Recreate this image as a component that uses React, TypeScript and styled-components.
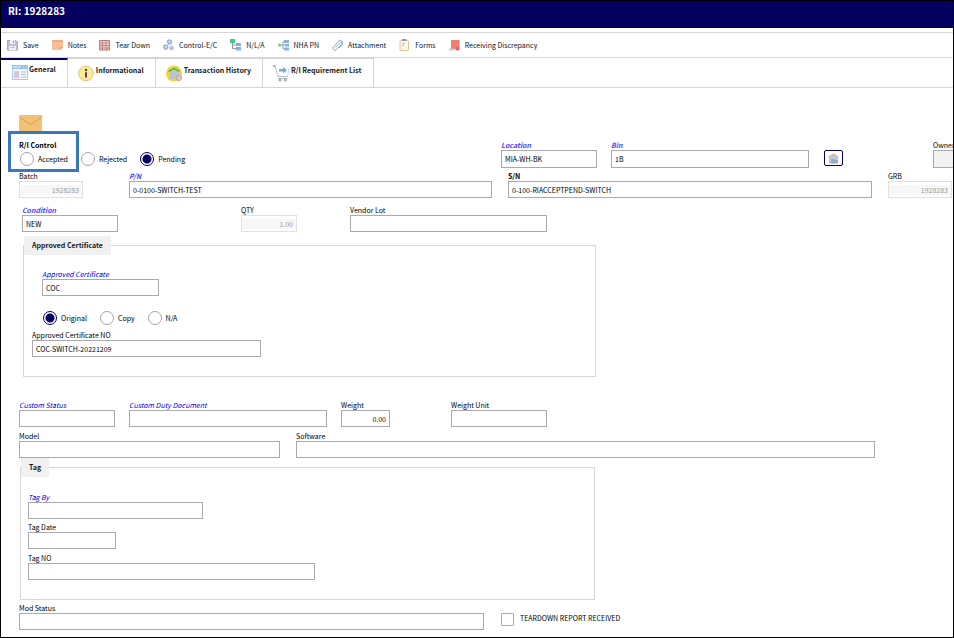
import React, { useState } from "react";
import type { ReactNode } from "react";
import styled, { createGlobalStyle, css } from "styled-components";

const NAVY = "#05005f";
const LINE = "#d6d6d6";
const FIELD_LINE = "#a9a9ae";

const GlobalStyle = createGlobalStyle`
  *, *::before, *::after { box-sizing: border-box; }
  body { margin: 0; background: #fff; }
  body, button, input, fieldset {
    font-family: "Noto Sans CJK SC", "Noto Sans", sans-serif;
    font-size: 7px;
    line-height: 10px;
    color: #000;
  }
`;

const Page = styled.div`
  border: 1px solid #000;
  overflow: hidden;
`;

const TitleBar = styled.header`
  height: 27px;
  padding: 2px 7px;
  background: ${NAVY};
`;

const Title = styled.h1`
  margin: 0;
  font-size: 10px;
  line-height: 16px;
  font-weight: 700;
  color: #fff;
`;

const Toolbar = styled.div`
  display: flex;
  align-items: center;
  gap: 13px;
  height: 26px;
  margin-top: 4px;
  padding: 0 6px;
  border-top: 1px solid ${LINE};
  border-bottom: 1px solid ${LINE};
`;

const ToolButton = styled.button`
  display: flex;
  align-items: center;
  gap: 5px;
  padding: 0;
  border: 0;
  background: none;
  white-space: nowrap;
  color: #0c1428;

  svg { width: 11px; height: 12px; flex: none; }
`;

const Tabs = styled.div`
  display: flex;
  height: 30px;
  border-bottom: 1px solid ${LINE};
`;

const Tab = styled.button<{ $active?: boolean }>`
  display: flex;
  align-items: flex-start;
  gap: 1px;
  padding: 6px 11px 0 10px;
  border: 0;
  border-top: 1px solid ${LINE};
  border-right: 1px solid ${LINE};
  background: #fff;
  font-weight: 700;
  line-height: 10px;
  white-space: nowrap;
  color: #1a1a1a;

  svg { width: 17px; height: 17px; flex: none; }

  ${(p) => p.$active && css`
    border-top: 2px solid ${NAVY};
    padding-top: 4px;
  `}
`;

const Form = styled.form`
  padding: 27px 1px 7px 18px;
`;

const MailButton = styled.button`
  display: block;
  width: 23px;
  height: 17px;
  margin-bottom: 8px;
  padding: 0;
  border: 0;
  background: none;

  svg { display: block; }
`;

const Row = styled.div<{ $top?: number; $left?: number }>`
  display: flex;
  align-items: flex-end;
  margin-top: ${(p) => p.$top ?? 0}px;
  padding-left: ${(p) => p.$left ?? 0}px;
`;

const FieldBox = styled.div<{ $width: number; $gap?: number; $grow?: boolean }>`
  display: flex;
  flex-direction: column;
  flex: ${(p) => (p.$grow ? "1 1" : "0 0")} ${(p) => p.$width}px;
  width: ${(p) => p.$width}px;
  margin-left: ${(p) => p.$gap ?? 0}px;
`;

type Tone = "plain" | "bold" | "link" | "required";

const FieldLabel = styled.label<{ $tone: Tone }>`
  height: 10px;
  white-space: nowrap;
  ${(p) => p.$tone === "bold" && css`font-weight: 700;`}
  ${(p) => p.$tone === "link" && css`font-style: italic; color: #0000f0;`}
  ${(p) => p.$tone === "required" && css`font-style: italic; font-weight: 700; color: #4a44ff;`}
`;

const TextInput = styled.input<{ $tall?: boolean; $right?: boolean }>`
  width: 100%;
  height: ${(p) => (p.$tall ? 18 : 17)}px;
  padding: 0 3px;
  border: 1px solid ${FIELD_LINE};
  border-radius: 0;
  background: #fff;
  text-align: ${(p) => (p.$right ? "right" : "left")};

  &:disabled {
    border-color: #e0e0e0;
    background: linear-gradient(#f7f7f7, #f7f7f7) 0 3px / 100% 10px no-repeat #fff;
    color: #9a9a9a;
  }

  &:read-only:enabled { background: #f3f3f3; }
`;

const ControlGroup = styled.div`
  position: relative;
  flex: 0 0 482px;
`;

const GroupTitle = styled.div`
  font-weight: 700;
`;

const Highlight = styled.div`
  position: absolute;
  top: -9px;
  left: -11px;
  width: 71px;
  height: 41px;
  border: 3px solid #3b78b8;
  pointer-events: none;
`;

const Radios = styled.div`
  display: flex;
  align-items: center;
  gap: 13px;
  height: 18px;
`;

const RadioLabel = styled.label`
  display: flex;
  align-items: center;
  gap: 4px;
  white-space: nowrap;
`;

const RadioInput = styled.input`
  appearance: none;
  width: 14px;
  height: 14px;
  margin: 0;
  border: 1px solid #a4a4a8;
  border-radius: 50%;
  background: #fff;

  &:checked {
    border-color: ${NAVY};
    background: radial-gradient(circle, ${NAVY} 0 4px, #fff 5px);
  }
`;

const BinButton = styled.button`
  display: flex;
  align-items: center;
  justify-content: center;
  width: 19px;
  height: 16px;
  margin: 0 90px 2px 15px;
  flex: none;
  padding: 0;
  border: 1px solid ${NAVY};
  border-radius: 2px;
  background: #fff;
`;

const Group = styled.fieldset<{ $top: number; $left: number; $width: number; $bottom: number }>`
  min-width: 0;
  max-width: ${(p) => p.$width}px;
  margin: ${(p) => p.$top}px 0 0 ${(p) => p.$left}px;
  padding: 0 0 ${(p) => p.$bottom}px;
  border: 1px solid ${LINE};
`;

const Legend = styled.legend`
  padding: 0 8px;
  background: #f0f0f0;
  font-weight: 700;
  line-height: 19px;
  color: #1a1a1a;
`;

const CheckLabel = styled.label`
  display: flex;
  align-items: flex-start;
  gap: 6px;
  height: 13px;
  margin: 0 0 4px 17px;
  white-space: nowrap;
`;

const CheckInput = styled.input`
  appearance: none;
  width: 13px;
  height: 13px;
  margin: 0;
  border: 1px solid ${FIELD_LINE};
  border-radius: 1px;
  background: #fff;

  &:checked { background: ${NAVY}; }
`;

interface FieldProps {
  id: string;
  label: string;
  width: number;
  value?: string;
  tone?: Tone;
  gap?: number;
  grow?: boolean;
  tall?: boolean;
  right?: boolean;
  disabled?: boolean;
  readOnly?: boolean;
}

function Field({ id, label, width, value = "", tone = "plain", gap, grow, tall, right, disabled, readOnly }: FieldProps) {
  return (
    <FieldBox $width={width} $gap={gap} $grow={grow}>
      <FieldLabel htmlFor={id} $tone={tone}>{label}</FieldLabel>
      <TextInput id={id} defaultValue={value} $tall={tall} $right={right} disabled={disabled} readOnly={readOnly} />
    </FieldBox>
  );
}

interface RadioSetProps {
  name: string;
  options: string[];
  initial: string;
}

function RadioSet({ name, options, initial }: RadioSetProps) {
  const [chosen, setChosen] = useState(initial);
  return (
    <Radios role="radiogroup" aria-label={name}>
      {options.map((o) => (
        <RadioLabel key={o}>
          <RadioInput type="radio" name={name} checked={chosen === o} onChange={() => setChosen(o)} />
          {o}
        </RadioLabel>
      ))}
    </Radios>
  );
}

const Small = ({ children }: { children: ReactNode }) => (
  <svg viewBox="0 0 11 12" aria-hidden="true" fill="none">{children}</svg>
);

const Large = ({ children }: { children: ReactNode }) => (
  <svg viewBox="0 0 17 17" aria-hidden="true" fill="none">{children}</svg>
);

const tools: { label: string; icon: ReactNode }[] = [
  {
    label: "Save",
    icon: (
      <Small>
        <path d="M.5 1.500h8.500l1.500 1.500v8H.5z" fill="#c3bbdb" stroke="#aaa4c6" />
        <path d="M3 1h5v4H3z" fill="#eef0f6" />
        <path d="M6 2h1v2H6z" fill="#8d8fae" />
        <path d="M2 7h7v4H2z" fill="#f1eef6" />
        <path d="M3 8.500h5" stroke="#c5c0d5" />
      </Small>
    ),
  },
  {
    label: "Notes",
    icon: (
      <Small>
        <path d="M0 1h11v7l-3 3H0z" fill="#fabd96" />
        <path d="M0 1h11v2H0z" fill="#f3ab7f" />
        <path d="M8 11V8h3z" fill="#e39b75" />
      </Small>
    ),
  },
  {
    label: "Tear Down",
    icon: (
      <Small>
        <path d="M.5 1.500h10v9.500H.5z" fill="#f1d3cf" stroke="#b37a74" />
        <path d="M0 4h11M0 6.500h11M0 9h11M3.500 1v10M7 1v10" stroke="#bd8a83" />
        <path d="M6 11l4-4 1 1-3 4z" fill="#e4a35d" />
      </Small>
    ),
  },
  {
    label: "Control-E/C",
    icon: (
      <Small>
        <circle cx="6.500" cy="3" r="2" fill="#c9dcf3" stroke="#7ea8dc" strokeWidth="1.500" strokeDasharray="1.300 .3" />
        <circle cx="2.800" cy="8" r="2" fill="#d5dceb" stroke="#92a5c9" strokeWidth="1.500" strokeDasharray="1.300 .3" />
        <circle cx="8.500" cy="9" r="1.600" fill="#e9dcf0" stroke="#b7a4d0" strokeWidth="1.500" strokeDasharray="1.300 .3" />
      </Small>
    ),
  },
  {
    label: "N/L/A",
    icon: (
      <Small>
        <path d="M2.500 4v5.500H7M2.500 6H7" stroke="#8b9bab" />
        <path d="M0 0h5v4H0z" fill="#3dcb86" />
        <path d="M6 4h5v3H6zM6 8h5v3.500H6z" fill="#86b1e8" />
      </Small>
    ),
  },
  {
    label: "NHA PN",
    icon: (
      <Small>
        <path d="M3 6h5M8 2.500H5v7h3" stroke="#8ba5c7" />
        <path d="M0 4.500h3v3H0z" fill="#91c6a2" />
        <path d="M6 1h5v3H6zM7 5h4v2.500H7zM6 8.500h5v3H6z" fill="#8bb2e2" />
      </Small>
    ),
  },
  {
    label: "Attachment",
    icon: (
      <Small>
        <path d="M3.500 8.500l4.500-5a1.100 1.100 0 0 1 1.600 1.500L4.500 10.500A2 2 0 0 1 1.300 8l5.400-6a2.400 2.400 0 0 1 3.700 3L7 9" stroke="#7f9fc6" strokeWidth=".9" />
      </Small>
    ),
  },
  {
    label: "Forms",
    icon: (
      <Small>
        <rect x="1" y="1.500" width="8.500" height="10" rx="1" fill="#f9f7f2" stroke="#e8c28b" />
        <path d="M3 0h4.500v2H3z" fill="#8d98ab" />
        <path d="M3 4.500h3M3 6.500h2" stroke="#b5b9c2" />
      </Small>
    ),
  },
  {
    label: "Receiving Discrepancy",
    icon: (
      <Small>
        <path d="M2 1h8.500v9H2z" fill="#f47d73" />
        <path d="M0 9.500h6v2H0z" fill="#c8cbd9" />
        <circle cx="8.500" cy="9.500" r="2" fill="#e4525b" />
        <path d="M8.500 8.500v1.300" stroke="#fff" strokeWidth=".7" />
      </Small>
    ),
  },
];

const tabs: { label: string; icon: ReactNode }[] = [
  {
    label: "General",
    icon: (
      <Large>
        <path d="M1.500 1.500h15v14h-15z" fill="#f3f6fa" stroke="#b4c8d9" />
        <path d="M1 1h16v4H1z" fill="#93c3e6" />
        <path d="M2 3h8M12 3h1M14.500 3h1" stroke="#e9f4fb" />
        <path d="M3 7h5v7H3z" fill="#d5c5e5" />
        <path d="M10 8h5M10 10.500h5M10 13h5" stroke="#b7c2cf" />
      </Large>
    ),
  },
  {
    label: "Informational",
    icon: (
      <Large>
        <circle cx="8" cy="8.500" r="7.300" fill="#fdea96" stroke="#dcc67c" />
        <circle cx="8" cy="5" r="1.200" fill="#4a4a48" />
        <path d="M7 7.200h2v5.300H7z" fill="#4a4a48" />
      </Large>
    ),
  },
  {
    label: "Transaction History",
    icon: (
      <Large>
        <circle cx="8" cy="8.500" r="8" fill="#f6d42e" />
        <path d="M3.500 7l4.500-2 5 2v7h-9.500z" fill="#c2c3c8" />
        <path d="M2.500 6.500L8 3.500l5.500 3" stroke="#36bd83" strokeWidth="1.600" />
        <circle cx="13" cy="13" r="2.600" fill="#d7c4e5" stroke="#a895c0" strokeDasharray="1.500 .5" />
        <circle cx="13" cy="13" r=".9" fill="#f6d42e" />
      </Large>
    ),
  },
  {
    label: "R/I Requirement List",
    icon: (
      <Large>
        <path d="M0 1h2l3 10.500h9.500" stroke="#a5b0bb" strokeWidth=".8" />
        <path d="M0 1h2.500" stroke="#62b487" strokeWidth="1.200" />
        <path d="M14.500 11.500l1.500-8" stroke="#bcc8d3" strokeWidth=".7" />
        <path d="M6 4h4V2l4 3.200-4 3.200V6.500H6z" fill="#7ba7df" />
        <path d="M5 13.500h9.500" stroke="#aeb8c2" />
        <circle cx="7" cy="15" r="1.100" fill="#fff" stroke="#8d98a5" />
        <circle cx="12.500" cy="15" r="1.100" fill="#fff" stroke="#8d98a5" />
      </Large>
    ),
  },
];

export default function App() {
  const [active, setActive] = useState("General");

  return (
    <Page>
      <GlobalStyle />
      <TitleBar>
        <Title>RI: 1928283</Title>
      </TitleBar>
      <Toolbar role="toolbar" aria-label="Actions">
        {tools.map((t) => (
          <ToolButton key={t.label} type="button">{t.icon}{t.label}</ToolButton>
        ))}
      </Toolbar>
      <Tabs role="tablist">
        {tabs.map((t) => (
          <Tab
            key={t.label}
            type="button"
            role="tab"
            aria-selected={active === t.label}
            $active={active === t.label}
            onClick={() => setActive(t.label)}
          >
            {t.icon}{t.label}
          </Tab>
        ))}
      </Tabs>

      <Form>
        <MailButton type="button" aria-label="Send mail">
          <svg width="23" height="17" viewBox="0 0 23 17" fill="none" aria-hidden="true">
            <path d="M0 0h23v17H0z" fill="#f3c173" />
            <path d="M1 2.500l10.500 7L22 2.500" stroke="#c9a05f" />
          </svg>
        </MailButton>

        <Row>
          <ControlGroup>
            <GroupTitle>R/I Control</GroupTitle>
            <Row $left={1}>
              <RadioSet name="R/I Control" options={["Accepted", "Rejected", "Pending"]} initial="Pending" />
            </Row>
            <Highlight />
          </ControlGroup>
          <Field id="location" label="Location" tone="required" width={96} value="MIA-WH-BK" tall />
          <Field id="bin" label="Bin" tone="required" width={198} gap={14} value="1B" tall />
          <BinButton type="button" aria-label="Bin lookup">
            <svg width="11" height="11" viewBox="0 0 11 11" fill="none" aria-hidden="true">
              <path d="M1 4l4.500-3L10 4v6.500H1z" fill="#b5cbe2" />
              <path d="M.5 4L5.500 1l5 3" stroke="#d5a489" />
              <path d="M3 6h4v4.500H3z" fill="#8faecd" />
              <circle cx="8.500" cy="8.500" r="1.800" fill="#a89bc9" />
            </svg>
          </BinButton>
          <Field id="owner" label="Owner" width={96} tall readOnly />
        </Row>

        <Row $top={3}>
          <Field id="batch" label="Batch" width={64} value="1928283" right disabled />
          <Field id="pn" label="P/N" tone="required" width={363} gap={46} value="0-0100-SWITCH-TEST" grow />
          <Field id="sn" label="S/N" tone="bold" width={364} gap={16} value="0-100-RIACCEPTPEND-SWITCH" grow />
          <Field id="grb" label="GRB" width={64} gap={16} value="1928283" right disabled />
        </Row>

        <Row $top={7} $left={3}>
          <Field id="condition" label="Condition" tone="required" width={96} value="NEW" />
          <Field id="qty" label="QTY" width={56} gap={123} value="1.00" right disabled />
          <Field id="vendor-lot" label="Vendor Lot" width={197} gap={53} />
        </Row>

        <Group $top={4} $left={4} $width={573} $bottom={19}>
          <Legend>Approved Certificate</Legend>
          <Row $top={14} $left={18}>
            <Field id="certificate" label="Approved Certificate" tone="link" width={117} value="COC" />
          </Row>
          <Row $top={13} $left={19}>
            <RadioSet name="Certificate type" options={["Original", "Copy", "N/A"]} initial="Original" />
          </Row>
          <Row $top={3} $left={8}>
            <Field id="certificate-no" label="Approved Certificate NO" width={229} value="COC-SWITCH-20221209" />
          </Row>
        </Group>

        <Row $top={23}>
          <Field id="custom-status" label="Custom Status" tone="link" width={96} />
          <Field id="duty-document" label="Custom Duty Document" tone="link" width={198} gap={14} />
          <Field id="weight" label="Weight" width={49} gap={14} value="0.00" right />
          <Field id="weight-unit" label="Weight Unit" width={96} gap={61} />
        </Row>

        <Row $top={4}>
          <Field id="model" label="Model" width={261} />
          <Field id="software" label="Software" width={579} gap={16} />
        </Row>

        <Group $top={0} $left={1} $width={575} $bottom={19}>
          <Legend>Tag</Legend>
          <Row $top={15} $left={7}>
            <Field id="tag-by" label="Tag By" tone="link" width={175} />
          </Row>
          <Row $top={3} $left={7}>
            <Field id="tag-date" label="Tag Date" width={88} />
          </Row>
          <Row $top={4} $left={7}>
            <Field id="tag-no" label="Tag NO" width={287} />
          </Row>
        </Group>

        <Row $top={3}>
          <Field id="mod-status" label="Mod Status" width={465} />
          <CheckLabel>
            <CheckInput type="checkbox" />
            TEARDOWN REPORT RECEIVED
          </CheckLabel>
        </Row>
      </Form>
    </Page>
  );
}
